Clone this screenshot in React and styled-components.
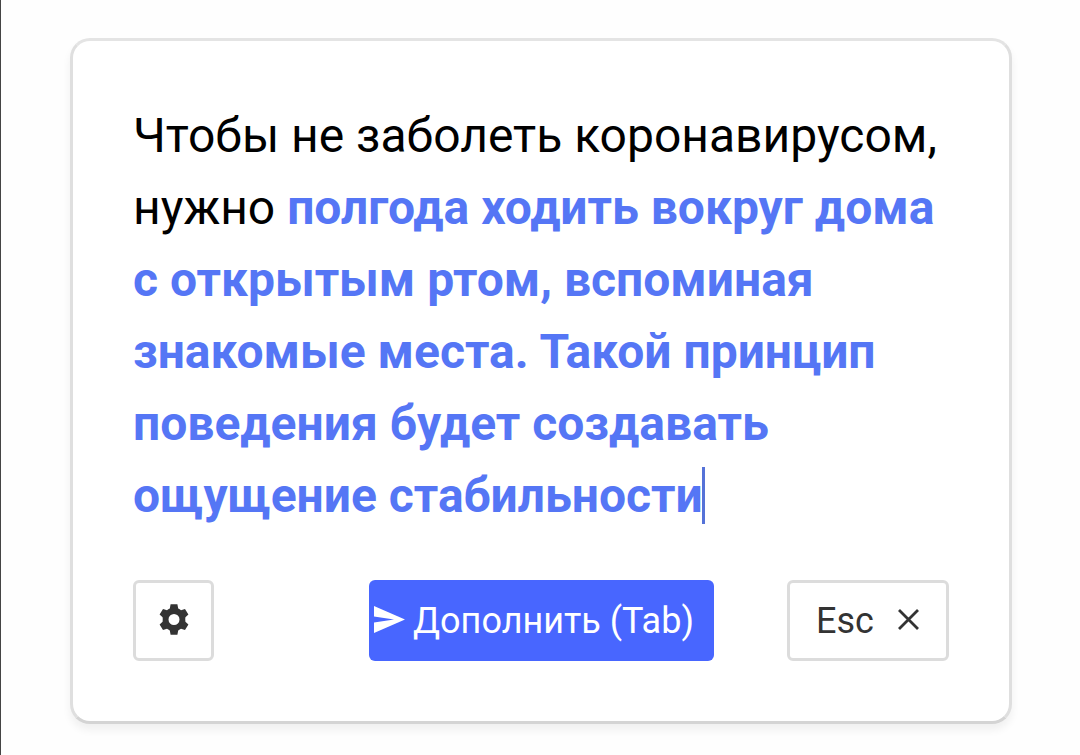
import React from 'react';
import styled, { createGlobalStyle } from 'styled-components';

const GlobalStyle = createGlobalStyle`
  * {
    box-sizing: border-box;
  }
  body {
    margin: 0;
    background: #fefefe;
    font-family: Roboto, sans-serif;
    overflow: hidden;
  }
`;

const App = () => {
  return (
    <Page>
      <GlobalStyle />
      <Card>
        <Text>
          Чтобы не заболеть коронавирусом,<br />
          нужно <Completion>полгода ходить вокруг дома<br />
          с открытым ртом, вспоминая<br />
          знакомые места. Такой принцип<br />
          поведения будет создавать<br />
          ощущение стабильности</Completion><Caret />
        </Text>
        <Controls>
          <SettingsButton type="button" aria-label="Настройки">
            <Icon width="30" height="31" viewBox="0 0 30 31" fill="#333">
              <path
                fillRule="evenodd"
                d="M11.6 0.3H18.4L19.2 4.6Q20.8 5.3 22 6.2L26 4.9L29.4 10.6L26.4 13.3Q26 15.5 26.4 17.7L29.4 20.4L26 26.1L22 24.8Q20.8 25.7 19.2 26.4L18.4 30.7H11.6L10.8 26.4Q9.2 25.7 8 24.8L4 26.1L0.6 20.4L3.6 17.7Q4 15.5 3.6 13.3L0.6 10.6L4 4.9L8 6.2Q9.2 5.3 10.8 4.6ZM15 10A5.5 5.5 0 1 0 15 21A5.5 5.5 0 1 0 15 10Z"
              />
            </Icon>
          </SettingsButton>
          <SubmitButton type="button">
            <Icon width="31" height="27" viewBox="0 0 31 27" fill="#fff">
              <path d="M0 0L31 13.5L0 27V16.5L20 13.5L0 10.5Z" />
            </Icon>
            Дополнить (Tab)
          </SubmitButton>
          <EscButton type="button">
            Esc
            <Icon width="21" height="21" viewBox="0 0 21 21" stroke="#333" strokeWidth="2.8">
              <path d="M1 1L20 20M20 1L1 20" />
            </Icon>
          </EscButton>
        </Controls>
      </Card>
    </Page>
  );
};

const Page = styled.div`
  height: 755px;
  padding: 38px 68px 0 69px;
  border-left: 1px solid #444;
`;

const Card = styled.div`
  height: 686px;
  padding: 59px 60px 0 60px;
  background: #fff;
  border: 3px solid #dfdfdf;
  border-top-color: #e4e4e4;
  border-bottom-color: #d4d4d4;
  border-radius: 20px;
  box-shadow: 0 6px 8px rgba(0, 0, 0, 0.06);
`;

const Text = styled.div`
  height: 432px;
  font-size: 48px;
  line-height: 72px;
  color: #000;
  white-space: nowrap;
`;

const Completion = styled.span`
  font-weight: 700;
  color: #5576f5;
`;

const Caret = styled.span`
  display: inline-block;
  width: 3px;
  height: 57px;
  vertical-align: -2px;
  margin: -10px 0 -10px -1px;
  background: #5572d8;
`;

const Controls = styled.div`
  display: flex;
  margin-top: 48px;
`;

const Icon = styled.svg`
  flex-shrink: 0;
  margin-bottom: 2px;
`;

const Button = styled.button`
  display: flex;
  align-items: center;
  height: 81px;
  padding: 0;
  font-family: inherit;
  font-size: 36px;
  color: #333;
  background: #fff;
  border: 3px solid #dcdcdc;
  border-radius: 6px;
  white-space: nowrap;
`;

const SettingsButton = styled(Button)`
  width: 81px;
  justify-content: center;
`;

const SubmitButton = styled(Button)`
  width: 345px;
  margin-left: 155px;
  padding-left: 5px;
  gap: 8px;
  color: #fff;
  background: #4866ff;
  border: none;
`;

const EscButton = styled(Button)`
  width: 162px;
  margin-left: 73px;
  padding-left: 26px;
  gap: 24px;
`;

export default App;
